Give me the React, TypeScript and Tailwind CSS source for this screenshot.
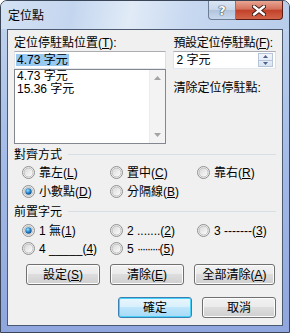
import React from "react";

const font = { fontFamily: '"Liberation Sans", "Noto Sans CJK TC", sans-serif' };

function Key({ k }: { k: string }) {
  return (
    <span>
      (<u>{k}</u>)
    </span>
  );
}

function Radio({ on = false }: { on?: boolean }) {
  return (
    <svg width="13" height="13" viewBox="0 0 13 13" className="shrink-0">
      <defs>
        <linearGradient id="rg" x1="0" y1="0" x2="1" y2="1">
          <stop offset="0" stopColor="#d6d6d6" />
          <stop offset="1" stopColor="#ffffff" />
        </linearGradient>
        <radialGradient id="dot" cx="0.4" cy="0.35" r="0.7">
          <stop offset="0" stopColor="#a6e0ff" />
          <stop offset="0.5" stopColor="#2b8bd0" />
          <stop offset="1" stopColor="#0d3f7a" />
        </radialGradient>
      </defs>
      <circle cx="6.5" cy="6.5" r="6" fill="#f4f4f4" stroke="#8e8f8f" />
      <circle cx="6.5" cy="6.5" r="4.5" fill="url(#rg)" stroke="#b4b4b4" strokeWidth="0.8" />
      {on && <circle cx="6.5" cy="6.5" r="3.2" fill="url(#dot)" />}
    </svg>
  );
}

function Opt({ on, children }: { on?: boolean; children: React.ReactNode }) {
  return (
    <div className="flex items-center gap-[4px] whitespace-nowrap">
      <Radio on={on} />
      <span className="leading-[14px]">{children}</span>
    </div>
  );
}

function Btn({ w, def, children }: { w: string; def?: boolean; children: React.ReactNode }) {
  return (
    <div
      className={`${w} h-[21px] rounded-[3px] border flex items-center justify-center leading-[14px] whitespace-nowrap ${
        def
          ? "border-[#3c7fb1] shadow-[inset_0_0_0_1px_#48d2f9] bg-[linear-gradient(#eaf6fd_0%,#d9f0fc_45%,#bee6fd_50%,#a7d9f5_100%)]"
          : "border-[#707070] shadow-[inset_0_0_0_1px_#fcfcfc] bg-[linear-gradient(#f2f2f2_0%,#ebebeb_45%,#dddddd_50%,#cfcfcf_100%)]"
      }`}
    >
      {children}
    </div>
  );
}

function Group({ title }: { title: string }) {
  return (
    <div className="flex items-center h-[14px]">
      <span className="leading-[14px]">{title}</span>
      <div className="flex-1 ml-[6px] h-[2px] border-t border-[#d5dfe5] border-b-white" />
    </div>
  );
}

export default function App() {
  return (
    <div
      style={font}
      className="relative w-[290px] h-[333px] text-[12px] text-black rounded-t-[7px] border border-[#3a4658] bg-[linear-gradient(180deg,#cbdcf1_0%,#bcd0ec_10%,#a7bfe9_40%,#8fa6de_100%)] overflow-hidden"
    >
      {/* title bar */}
      <div className="flex items-start justify-between h-[28px] bg-[linear-gradient(100deg,#d3e1f3_0%,#c4d6ef_25%,#e1ebf7_45%,#c7d8f0_65%,#b8cdeb_100%)]">
        <div className="pl-[7px] pt-[8px] leading-[14px] text-[12px]">定位點</div>
        <div className="flex mr-[6px]">
          <div className="w-[28px] h-[19px] rounded-bl-[4px] border border-t-0 border-[#6d7d94] bg-[linear-gradient(#dbe6f4_0%,#c9d7ea_48%,#b2c4dc_52%,#c8d8ee_100%)] flex items-center justify-center">
            <span
              className="text-white font-bold text-[13px] leading-[13px]"
              style={{ fontFamily: '"DejaVu Sans", sans-serif', textShadow: "0 0 1px #2d3a4c, 0 0 1px #2d3a4c, 0 0 1px #2d3a4c" }}
            >
              ?
            </span>
          </div>
          <div className="w-[47px] h-[19px] rounded-br-[4px] border border-t-0 border-l-0 border-[#5b1d15] bg-[linear-gradient(#e8a593_0%,#d4725c_45%,#c2412a_52%,#d2654a_100%)] flex items-center justify-center">
            <svg width="14" height="11" viewBox="0 0 14 11">
              <path d="M2 1.5 L12 9.5 M12 1.5 L2 9.5" stroke="#3a1a14" strokeWidth="4.2" strokeLinecap="round" />
              <path d="M2 1.5 L12 9.5 M12 1.5 L2 9.5" stroke="#ffffff" strokeWidth="2.4" strokeLinecap="round" />
            </svg>
          </div>
        </div>
      </div>

      {/* client area */}
      <div className="mx-[6px] h-[297px] border border-[#4b5a70] bg-[#f0f0f0] pl-[6px] pr-[6px] pt-[6px]">
        <div className="flex gap-[7px]">
          <div className="w-[153px]">
            <div className="h-[15px] leading-[14px] whitespace-nowrap">
              定位停駐點位置<Key k="T" />:
            </div>
            <div className="h-[18px] border border-[#abadb3] border-l-[#e2e3ea] border-r-[#dbdfe6] border-b-[#e3e9ef] bg-white flex items-center pl-[1px]">
              <span className="bg-[#99c9ef] leading-[12px] px-[1px]">4.73 字元</span>
            </div>
            <div className="h-[75px] border border-[#828790] bg-white flex">
              <div className="flex-1 pl-[2px] leading-[13px]">
                <div>4.73 字元</div>
                <div>15.36 字元</div>
              </div>
              <div className="w-[16px] bg-[#f3f3f3] border-l border-[#ececec] flex flex-col justify-between items-center py-[6px]">
                <svg width="7" height="4" viewBox="0 0 7 4">
                  <path d="M0 4 L3.5 0 L7 4 Z" fill="#a3a3a3" />
                </svg>
                <svg width="7" height="4" viewBox="0 0 7 4">
                  <path d="M0 0 L3.5 4 L7 0 Z" fill="#a3a3a3" />
                </svg>
              </div>
            </div>
          </div>
          <div className="w-[103px]">
            <div className="h-[15px] leading-[14px] whitespace-nowrap tracking-[-0.3px]">
              預設定位停駐點<Key k="F" />:
            </div>
            <div className="h-[18px] border border-[#abadb3] border-l-[#e2e3ea] border-r-[#dbdfe6] border-b-[#e3e9ef] bg-white flex items-center justify-between pl-[2px] pr-[2px]">
              <span className="leading-[12px]">2 字元</span>
              <div className="w-[15px] h-[14px] flex flex-col border border-[#b5c4d8] bg-[linear-gradient(#f1f5fb,#dae5f3)]">
                <div className="flex-1 flex items-center justify-center border-b border-[#b5c4d8]">
                  <svg width="5" height="3" viewBox="0 0 5 3">
                    <path d="M0 3 L2.5 0 L5 3 Z" fill="#4d6185" />
                  </svg>
                </div>
                <div className="flex-1 flex items-center justify-center">
                  <svg width="5" height="3" viewBox="0 0 5 3">
                    <path d="M0 0 L2.5 3 L5 0 Z" fill="#4d6185" />
                  </svg>
                </div>
              </div>
            </div>
            <div className="mt-[12px] leading-[14px] whitespace-nowrap">清除定位停駐點:</div>
          </div>
        </div>

        <div className="mt-[4px]">
          <Group title="對齊方式" />
        </div>
        <div className="ml-[8px] grid grid-cols-[88px_87px_1fr]">
          <div className="h-[20px] flex items-center pt-[1px]"><Opt>靠左<Key k="L" /></Opt></div>
          <div className="h-[20px] flex items-center pt-[1px]"><Opt>置中<Key k="C" /></Opt></div>
          <div className="h-[20px] flex items-center pt-[1px]"><Opt>靠右<Key k="R" /></Opt></div>
          <div className="h-[19px] flex items-center"><Opt on>小數點<Key k="D" /></Opt></div>
          <div className="h-[19px] flex items-center"><Opt>分隔線<Key k="B" /></Opt></div>
          <div />
        </div>

        <div className="mt-[4px]">
          <Group title="前置字元" />
        </div>
        <div className="ml-[8px] mt-[2px] grid grid-cols-[88px_87px_1fr]">
          <div className="h-[19px] flex items-center"><Opt on>1 無(<u>1</u>)</Opt></div>
          <div className="h-[19px] flex items-center"><Opt>2 .......(<u>2</u>)</Opt></div>
          <div className="h-[19px] flex items-center"><Opt>3 -------(<u>3</u>)</Opt></div>
          <div className="h-[17px] flex items-center"><Opt>4 _____(<u>4</u>)</Opt></div>
          <div className="h-[17px] flex items-center">
            <Opt>
              5 <span className="tracking-[-1.5px]">·········</span>(<u>5</u>)
            </Opt>
          </div>
          <div />
        </div>

        <div className="mt-[7px] ml-[12px] flex gap-[10px]">
          <Btn w="w-[74px]">設定<Key k="S" /></Btn>
          <Btn w="w-[74px]">清除<Key k="E" /></Btn>
          <Btn w="w-[81px]">全部清除<Key k="A" /></Btn>
        </div>
        <div className="mt-[12px] flex justify-end gap-[10px]">
          <Btn w="w-[74px]" def>確定</Btn>
          <Btn w="w-[74px]">取消</Btn>
        </div>
      </div>
    </div>
  );
}
